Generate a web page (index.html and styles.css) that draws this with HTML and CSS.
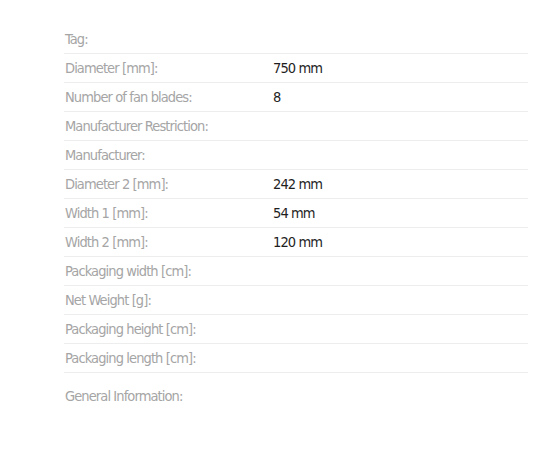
FILE: index.html
```html
<!DOCTYPE html>
<html lang="en">

<head>
    <meta charset="UTF-8" />
    <title>Specifications</title>
    <link rel="stylesheet" href="styles.css">
</head>

<body>

    <table class="specs">
        <tr>
            <td class="label">Tag:</td>
            <td class="value"></td>
        </tr>
        <tr>
            <td class="label">Diameter [mm]:</td>
            <td class="value">750 mm</td>
        </tr>
        <tr>
            <td class="label">Number of fan blades:</td>
            <td class="value">8</td>
        </tr>
        <tr>
            <td class="label">Manufacturer Restriction:</td>
            <td class="value"></td>
        </tr>
        <tr>
            <td class="label">Manufacturer:</td>
            <td class="value"></td>
        </tr>
        <tr>
            <td class="label">Diameter 2 [mm]:</td>
            <td class="value">242 mm</td>
        </tr>
        <tr>
            <td class="label">Width 1 [mm]:</td>
            <td class="value">54 mm</td>
        </tr>
        <tr>
            <td class="label">Width 2 [mm]:</td>
            <td class="value">120 mm</td>
        </tr>
        <tr>
            <td class="label">Packaging width [cm]:</td>
            <td class="value"></td>
        </tr>
        <tr>
            <td class="label">Net Weight [g]:</td>
            <td class="value"></td>
        </tr>
        <tr>
            <td class="label">Packaging height [cm]:</td>
            <td class="value"></td>
        </tr>
        <tr>
            <td class="label">Packaging length [cm]:</td>
            <td class="value"></td>
        </tr>
        <tr class="last">
            <td class="label">General Information:</td>
            <td class="value"></td>
        </tr>
    </table>

</body>

</html>
```

FILE: styles.css
```css
body {
    margin: 0;
    padding: 25px 28px 0 64px;
    background: #ffffff;
    font-family: 'DejaVu Sans Condensed', 'DejaVu Sans', sans-serif;
    font-stretch: condensed;
    font-size: 14.5px;
    letter-spacing: -0.9px;
}

.specs {
    width: 464px;
    border-collapse: collapse;
}

.specs td {
    height: 28px;
    padding: 0;
    border-bottom: 1px solid #ededed;
    vertical-align: middle;
}

.specs .label {
    width: 208px;
    padding-left: 1px;
    color: #a5a5a5;
}

.specs .value {
    color: #1e1e1e;
}

.specs .last td {
    border-bottom: none;
    height: 46px;
    vertical-align: top;
    padding-top: 15px;
}
```
